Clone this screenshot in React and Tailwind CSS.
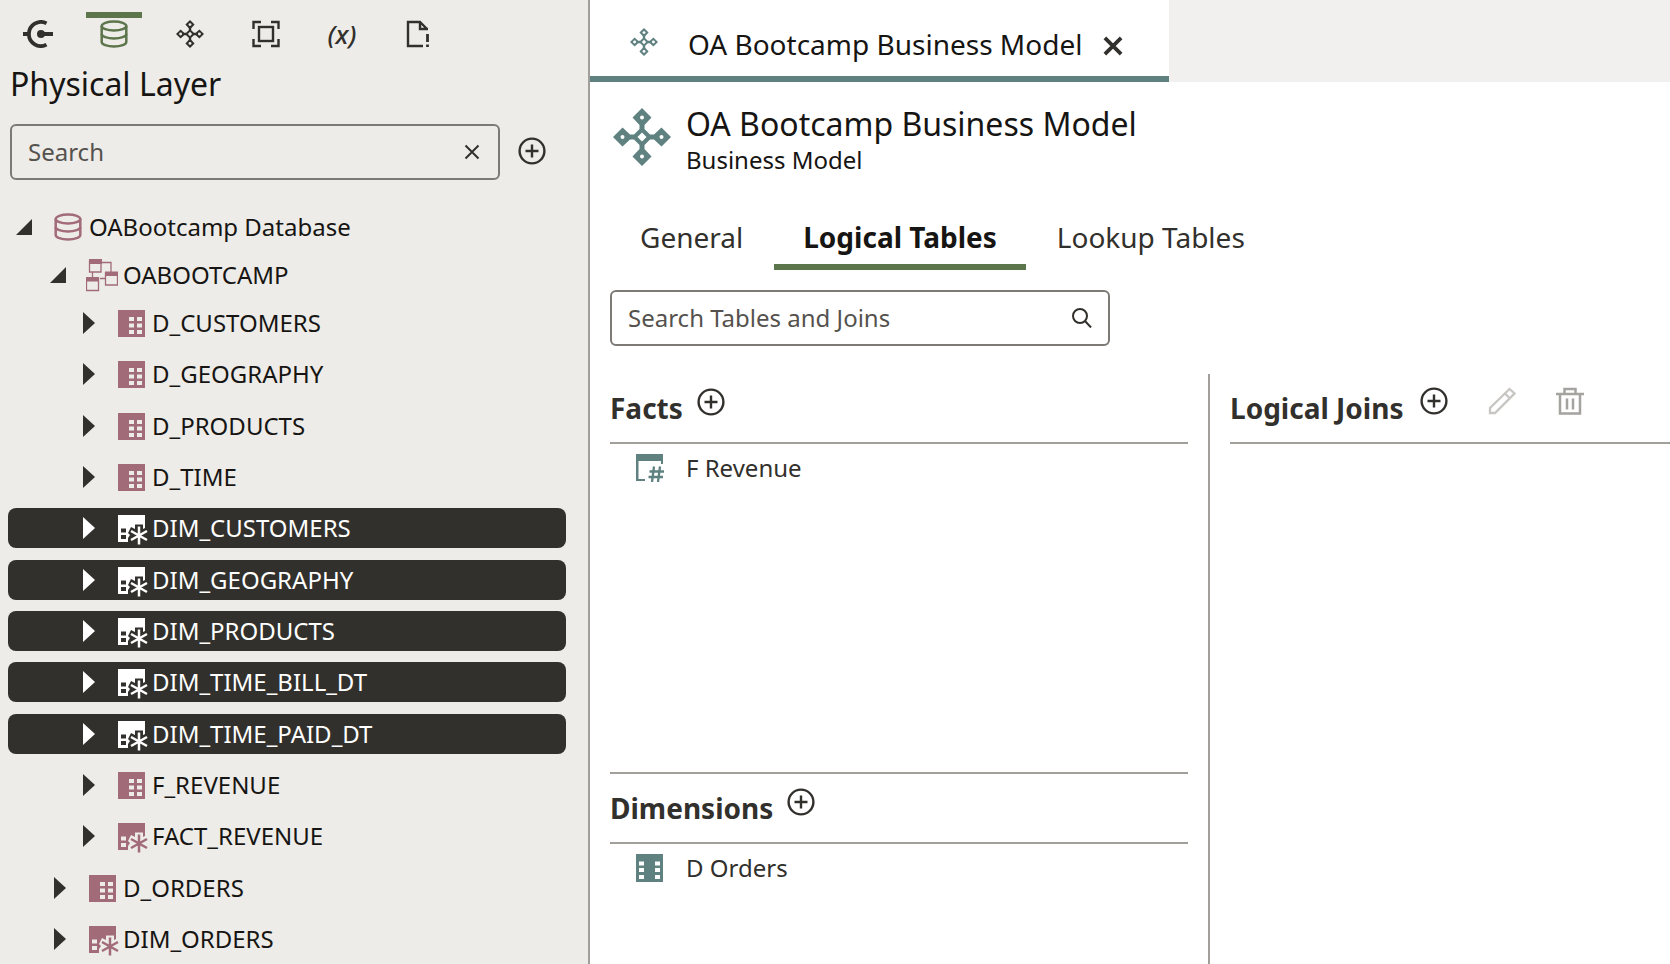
import { useState } from "react";

const tree = [
  { name: "OABootcamp Database", level: 0, icon: "database", open: true },
  { name: "OABOOTCAMP", level: 1, icon: "schema", open: true },
  { name: "D_CUSTOMERS", level: 2, icon: "table" },
  { name: "D_GEOGRAPHY", level: 2, icon: "table" },
  { name: "D_PRODUCTS", level: 2, icon: "table" },
  { name: "D_TIME", level: 2, icon: "table" },
  { name: "DIM_CUSTOMERS", level: 2, icon: "alias" },
  { name: "DIM_GEOGRAPHY", level: 2, icon: "alias" },
  { name: "DIM_PRODUCTS", level: 2, icon: "alias" },
  { name: "DIM_TIME_BILL_DT", level: 2, icon: "alias" },
  { name: "DIM_TIME_PAID_DT", level: 2, icon: "alias" },
  { name: "F_REVENUE", level: 2, icon: "table" },
  { name: "FACT_REVENUE", level: 2, icon: "alias" },
  { name: "D_ORDERS", level: 1, icon: "table" },
  { name: "DIM_ORDERS", level: 1, icon: "alias" },
];

const indents = ["pl-2", "pl-[42px]", "pl-[71px]"];

function ConnectionIcon() {
  return (
    <svg width="30" height="28" viewBox="0 0 30 28" fill="none" stroke="currentColor">
      <path d="M23.5 3.4A12 12 0 1 0 23.5 24.6" strokeWidth="3.8" />
      <path d="M0 14h6M18 14h12" strokeWidth="4" />
      <circle cx="18" cy="14" r="4" fill="currentColor" stroke="none" />
    </svg>
  );
}

function DatabaseIcon() {
  return (
    <svg width="28" height="28" viewBox="0 0 28 28" fill="none" stroke="currentColor" strokeWidth="2.5">
      <ellipse cx="14" cy="6" rx="12.3" ry="4.5" />
      <path d="M1.7 6v16c0 2.5 5.5 4.5 12.3 4.500s12.300-2 12.300-4.500V6" />
      <path d="M1.7 14c0 2.5 5.5 4.5 12.3 4.500s12.300-2 12.300-4.500" />
    </svg>
  );
}

// four diamonds joined to a smaller one in the middle
function ModelIcon({ size, hole = 2 }) {
  return (
    <svg width={size} height={size} viewBox="0 0 58 58" fill="currentColor">
      <path d="M29 0L38.500 9.500L31.500 17V21L37 26.500H41L48.500 19.500L58 29L48.500 38.500L41 31.500H37L31.500 37V41L38.500 48.500L29 58L19.500 48.500L26.500 41V37L21 31.500H17L9.500 38.500L0 29L9.500 19.500L17 26.500H21L26.500 21V17L19.500 9.500Z" />
      <g className="fill-(--hole)">
        <path d="M29 24.500l4.500 4.500-4.500 4.500-4.500-4.500z" />
        <circle cx="29" cy="9.500" r={hole} />
        <circle cx="29" cy="48.500" r={hole} />
        <circle cx="9.500" cy="29" r={hole} />
        <circle cx="48.500" cy="29" r={hole} />
      </g>
    </svg>
  );
}

function FrameIcon() {
  return (
    <svg width="28" height="28" viewBox="0 0 28 28" fill="none" stroke="currentColor" strokeWidth="2.400">
      <path d="M1.500 9V2H9M19 2h7.500v7M26.500 19v7H19M9 26H1.500v-7" />
      <rect x="7" y="7" width="14" height="14" />
    </svg>
  );
}

function FileIcon() {
  return (
    <svg width="24" height="28" viewBox="0 0 24 28" fill="none" stroke="currentColor" strokeWidth="2.400">
      <path d="M17 26H2V2h12l7 7M14 2v7h8" />
      <path d="M21.500 14v8M21.500 24.500V27" strokeWidth="2.800" />
    </svg>
  );
}

function SchemaIcon() {
  return (
    <svg className="shrink-0" width="32" height="34" viewBox="0 0 32 34" fill="none" stroke="currentColor">
      <path d="M16 4.500h9V14M6.500 14v6M14 20.500h5" strokeWidth="1.300" />
      <path d="M3.500 3h11.500v11H3.500zM19.500 15h12v12h-12zM.500 20.500h12v12H.500z" strokeWidth="1.300" />
      <path d="M3 1h13v5H3zM19 13.500h13V18H19zM0 19h13v4.500H0z" fill="currentColor" stroke="none" />
    </svg>
  );
}

function TableIcon() {
  return (
    <svg width="27" height="27" viewBox="0 0 27 27" fill="currentColor" fillRule="evenodd">
      <path d="M0 0h27v27H0zM11 7v4h5V7zM19 7v4h5V7zM11 13.500v4h5v-4zM19 13.500v4h5v-4zM11 20v4h5v-4zM19 20v4h5v-4z" />
    </svg>
  );
}

function AliasIcon() {
  return (
    <svg className="overflow-visible" width="27" height="27" viewBox="0 0 27 27" fill="currentColor" fillRule="evenodd">
      <path d="M0 0h27v13l-2 1V9.500h-8V14l-4-2-3 6 2 2-2 3v4H0zM3 13.500v4h5v-4zM3 20v4h5v-4z" />
      <path d="M21 11.500v18M13 16l16 9M29 16l-16 9" stroke="currentColor" strokeWidth="2.500" />
    </svg>
  );
}

function FactIcon() {
  return (
    <svg width="28" height="28" viewBox="0 0 28 28" fill="none" stroke="currentColor" strokeWidth="2.300">
      <path d="M0 0h27v10h-2V7H2.500v18H9v2H0z" fill="currentColor" stroke="none" />
      <path d="M18 12.500l-2 15.500M24 12.500L22 28M13.500 17.500H28M12.500 23H27" />
    </svg>
  );
}

function DimensionIcon() {
  return (
    <svg width="28" height="28" viewBox="0 0 28 28" fill="currentColor" fillRule="evenodd">
      <path d="M0 0h27v28H0zM3 7.500v4h5v-4zM19 7.500v4h5v-4zM3 14v4h5v-4zM19 14v4h5v-4zM3 21v4h5v-4zM19 21v4h5v-4z" />
    </svg>
  );
}

function PlusCircle() {
  return (
    <svg width="28" height="28" viewBox="0 0 28 28" fill="none" stroke="currentColor" strokeWidth="2.400">
      <circle cx="14" cy="14" r="12.400" />
      <path d="M14 7.500v13M7.500 14h13" />
    </svg>
  );
}

function SearchIcon() {
  return (
    <svg width="20" height="20" viewBox="0 0 20 20" fill="none" stroke="currentColor" strokeWidth="2">
      <circle cx="8" cy="8" r="7" />
      <path d="M13 13l6 6.500" />
    </svg>
  );
}

function CloseIcon({ size, weight }) {
  return (
    <svg width={size} height={size} viewBox="0 0 16 16" fill="none" stroke="currentColor" strokeWidth={weight}>
      <path d="M1.500 1.500l13 13M14.500 1.500l-13 13" />
    </svg>
  );
}

function PencilIcon() {
  return (
    <svg width="28" height="28" viewBox="0 0 28 28" fill="none" stroke="currentColor" strokeWidth="2.300">
      <path d="M2 26v-5L21.500 2l5 4.500L7 26zM17 6.500l5 5" />
    </svg>
  );
}

function TrashIcon() {
  return (
    <svg width="28" height="28" viewBox="0 0 28 28" fill="none" stroke="currentColor" strokeWidth="2.500">
      <path d="M0 7h28M8.500 7V2h11v5M4 7v19.500h20V7M11 11.500v11M17 11.500v11" />
    </svg>
  );
}

const icons = {
  database: DatabaseIcon,
  schema: SchemaIcon,
  table: TableIcon,
  alias: AliasIcon,
};

const tools = [
  { name: "Connections", icon: <ConnectionIcon /> },
  { name: "Physical Layer", icon: <DatabaseIcon /> },
  { name: "Logical Layer", icon: <ModelIcon size={28} hole={3} /> },
  { name: "Presentation Layer", icon: <FrameIcon /> },
  { name: "Variables", icon: <span className="text-[26px] leading-7 font-medium italic">(x)</span> },
  { name: "Messages", icon: <FileIcon /> },
];

function TreeRow({ item, selected, onClick }) {
  const Icon = icons[item.icon];
  return (
    <li className={item.open || item.name === "D_CUSTOMERS" ? "mt-2" : "mt-[11px] nth-[3n+2]:mt-3"}>
      <button
        onClick={onClick}
        className={`flex h-10 w-full items-center rounded-lg text-left text-2xl ${indents[item.level]} ${
          selected ? "bg-[#32302c] text-white" : "text-[#161513]"
        }`}
      >
        <span className={`flex w-4 justify-end ${selected ? "text-white" : "text-[#32302c]"}`}>
          {item.open ? (
            <svg width="16" height="16" viewBox="0 0 16 16" fill="currentColor">
              <path d="M16 0v16H0z" />
            </svg>
          ) : (
            <svg width="12" height="22" viewBox="0 0 12 22" fill="currentColor">
              <path d="M0 0l12 11L0 22z" />
            </svg>
          )}
        </span>
        <span
          className={`ml-[22px] flex w-7 shrink-0 justify-center ${selected ? "text-white" : "text-[#a16b78]"}`}
        >
          <Icon />
        </span>
        <span className="ml-[7px]">{item.name}</span>
      </button>
    </li>
  );
}

function SectionTitle({ title }) {
  return (
    <div className="flex h-[70px] gap-[14px] border-b-2 border-[#a29e99]">
      <h2 className="pt-4 text-[28px] leading-9 font-bold">{title}</h2>
      <button aria-label={`Add ${title}`} className="mt-[14px] h-7">
        <PlusCircle />
      </button>
    </div>
  );
}

export default function App() {
  const [selected, setSelected] = useState([
    "DIM_CUSTOMERS",
    "DIM_GEOGRAPHY",
    "DIM_PRODUCTS",
    "DIM_TIME_BILL_DT",
    "DIM_TIME_PAID_DT",
  ]);
  const [tab, setTab] = useState("Logical Tables");

  function toggle(name) {
    setSelected(
      selected.includes(name) ? selected.filter((n) => n !== name) : [...selected, name]
    );
  }

  return (
    <div className="flex h-screen overflow-hidden bg-white font-['Noto_Sans',sans-serif] text-[#32302c]">
      <aside className="w-[590px] shrink-0 border-r-2 border-[#a29e99] bg-[#eeece8] [--hole:#eeece8]">
        <nav className="flex gap-5 pt-3 pl-[10px]">
          {tools.map((tool) => (
            <button
              key={tool.name}
              aria-label={tool.name}
              className={`flex h-11 w-14 items-center justify-center border-t-6 pb-[6px] ${
                tool.name === "Physical Layer"
                  ? "border-[#5d754b] text-[#5d754b]"
                  : "border-transparent"
              }`}
            >
              {tool.icon}
            </button>
          ))}
        </nav>
        <h1 className="mt-2 pl-[10px] text-[32px] leading-10 text-[#161513]">Physical Layer</h1>
        <div className="mt-5 flex items-center gap-[18px] pl-[10px]">
          <div className="flex h-14 w-[490px] items-center rounded-md border-2 border-[#7d7974] pr-[18px] pl-4">
            <input
              aria-label="Search"
              placeholder="Search"
              className="min-w-0 flex-1 bg-transparent text-2xl outline-none placeholder:text-[#55524e]"
            />
            <button aria-label="Clear">
              <CloseIcon size={16} weight={2} />
            </button>
          </div>
          <button aria-label="Add" className="pb-[2px]">
            <PlusCircle />
          </button>
        </div>
        <ul className="mt-[27px] pr-[22px] pl-2">
          {tree.map((item) => (
            <TreeRow
              key={item.name}
              item={item}
              selected={selected.includes(item.name)}
              onClick={() => toggle(item.name)}
            />
          ))}
        </ul>
      </aside>

      <main className="flex min-w-0 flex-1 flex-col [--hole:#ffffff]">
        <div className="flex bg-[#f2f0ee]">
          <div className="flex h-[82px] items-center border-b-6 border-[#5f8180] bg-white pt-3 pr-[46px] pl-10">
            <span className="pb-1 text-[#5f8180]">
              <ModelIcon size={28} hole={3} />
            </span>
            <span className="ml-[30px] text-[28px] leading-9 text-[#161513]">
              OA Bootcamp Business Model
            </span>
            <button aria-label="Close tab" className="ml-[21px] pt-1">
              <CloseIcon size={20} weight={3} />
            </button>
          </div>
        </div>

        <header className="flex gap-[15px] pt-[22px] pl-[23px]">
          <span className="pt-1 text-[#5f8180]">
            <ModelIcon size={58} />
          </span>
          <div className="text-[#161513]">
            <h1 className="text-[32px] leading-10">OA Bootcamp Business Model</h1>
            <p className="text-2xl leading-8">Business Model</p>
          </div>
        </header>

        <div className="mt-[34px] flex gap-[2px] pl-[21px]" role="tablist">
          {["General", "Logical Tables", "Lookup Tables"].map((name) => (
            <button
              key={name}
              role="tab"
              aria-selected={tab === name}
              onClick={() => setTab(name)}
              className={`h-[60px] border-b-6 px-[29px] text-[28px] leading-9 ${
                tab === name
                  ? "border-[#5d754b] font-bold text-[#161513]"
                  : "border-transparent"
              }`}
            >
              {name}
            </button>
          ))}
        </div>

        <div className="mt-5 ml-5 flex h-14 w-[500px] items-center rounded-md border-2 border-[#7d7974] px-4">
          <input
            aria-label="Search Tables and Joins"
            placeholder="Search Tables and Joins"
            className="min-w-0 flex-1 bg-transparent text-2xl outline-none placeholder:text-[#55524e]"
          />
          <button aria-label="Search">
            <SearchIcon />
          </button>
        </div>

        <div className="mt-7 flex flex-1">
          <div className="w-[620px] shrink-0 border-r-2 border-[#a29e99] px-5">
            <section className="h-[400px] border-b-2 border-[#a29e99]">
              <SectionTitle title="Facts" />
              <a href="#f-revenue" className="flex h-12 items-center gap-[22px] pl-[26px] text-2xl">
                <span className="text-[#5f8180]">
                  <FactIcon />
                </span>
                F Revenue
              </a>
            </section>
            <section>
              <SectionTitle title="Dimensions" />
              <a href="#d-orders" className="flex h-12 items-center gap-[22px] pl-[26px] text-2xl">
                <span className="text-[#5f8180]">
                  <DimensionIcon />
                </span>
                D Orders
              </a>
            </section>
          </div>
          <section className="flex-1 pl-5">
            <div className="flex h-[70px] gap-[17px] border-b-2 border-[#a29e99]">
              <h2 className="pt-4 text-[28px] leading-9 font-bold">Logical Joins</h2>
              <button aria-label="Add join" className="mt-[13px] h-7">
                <PlusCircle />
              </button>
              <button aria-label="Edit join" disabled className="mt-[13px] ml-[23px] h-7 text-[#c8c6c3]">
                <PencilIcon />
              </button>
              <button aria-label="Delete join" disabled className="mt-[13px] ml-[23px] h-7 text-[#a5a3a0]">
                <TrashIcon />
              </button>
            </div>
          </section>
        </div>
      </main>
    </div>
  );
}
